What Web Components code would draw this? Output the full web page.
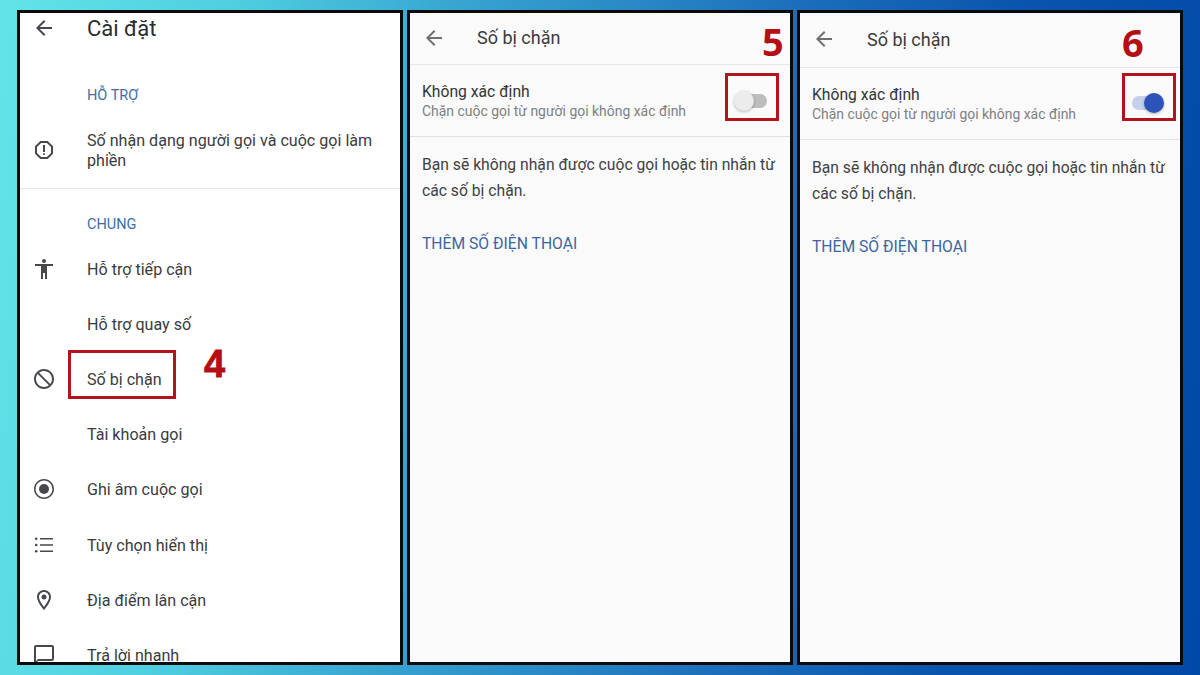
<!DOCTYPE html>
<html lang="vi">
<head>
<meta charset="utf-8">
<title>Số bị chặn</title>
<style>
html,body{margin:0;padding:0;height:100%}
body{width:1200px;height:675px;overflow:hidden;font-family:Roboto,"Noto Sans",sans-serif;background:linear-gradient(97deg,#62e4e8 0%,#4fcfe0 18%,#35a0cf 38%,#1c6fbb 62%,#0a54ad 80%,#0049a8 100%)}
</style>
</head>
<body>
<x-stage>
  <x-phone>
    <x-app-header title="Cài đặt" size="22" h="30" x="67"></x-app-header>
    <x-section-label top="43" bottom="23">HỖ TRỢ</x-section-label>
    <x-setting-item icon="report" two>Số nhận dạng người gọi và cuộc gọi làm phiền</x-setting-item>
    <x-rule top="17"></x-rule>
    <x-section-label top="26" bottom="6">CHUNG</x-section-label>
    <x-setting-item icon="access">Hỗ trợ tiếp cận</x-setting-item>
    <x-setting-item>Hỗ trợ quay số</x-setting-item>
    <x-setting-item icon="block">Số bị chặn</x-setting-item>
    <x-setting-item>Tài khoản gọi</x-setting-item>
    <x-setting-item icon="record">Ghi âm cuộc gọi</x-setting-item>
    <x-setting-item icon="list">Tùy chọn hiển thị</x-setting-item>
    <x-setting-item icon="place">Địa điểm lân cận</x-setting-item>
    <x-setting-item icon="chat">Trả lời nhanh</x-setting-item>
    <x-callout slot="over" left="48" top="337" width="108" height="49"></x-callout>
    <x-step slot="over" left="184" top="329" font="Liberation Sans" heavy>4</x-step>
  </x-phone>
  <x-phone tint>
    <x-blocked-screen head="49"></x-blocked-screen>
    <x-callout slot="over" left="315" top="60" width="54" height="48"></x-callout>
    <x-step slot="over" left="352" top="6">5</x-step>
  </x-phone>
  <x-phone tint>
    <x-blocked-screen head="52" on></x-blocked-screen>
    <x-callout slot="over" left="322" top="60" width="54" height="48"></x-callout>
    <x-step slot="over" left="322" top="7">6</x-step>
  </x-phone>
</x-stage>
<script>
const ICONS = {
  back:'<path d="M20 11H7.83l5.59-5.59L12 4l-8 8 8 8 1.41-1.41L7.83 13H20v-2z"/>',
  report:'<path d="M15.73 3H8.27L3 8.27v7.46L8.27 21h7.46L21 15.73V8.27L15.73 3zM19 14.9L14.9 19H9.1L5 14.9V9.1L9.1 5h5.8L19 9.1v5.8z"/><circle cx="12" cy="16" r="1"/><path d="M11 7h2v7h-2z"/>',
  access:'<path d="M12 2c1.1 0 2 .9 2 2s-.9 2-2 2-2-.9-2-2 .9-2 2-2zm9 7h-6v13h-2v-6h-2v6H9V9H3V7h18v2z"/>',
  block:'<path transform="matrix(-1 0 0 1 24 0)" d="M12 2C6.48 2 2 6.48 2 12s4.48 10 10 10 10-4.48 10-10S17.52 2 12 2zM4 12c0-4.42 3.58-8 8-8 1.85 0 3.55.63 4.9 1.69L5.69 16.9C4.63 15.55 4 13.85 4 12zm8 8c-1.85 0-3.55-.63-4.9-1.69L18.31 7.1C19.37 8.45 20 10.15 20 12c0 4.42-3.58 8-8 8z"/>',
  record:'<path d="M12 2C6.48 2 2 6.48 2 12s4.48 10 10 10 10-4.48 10-10S17.52 2 12 2zm0 18.4c-4.64 0-8.4-3.76-8.4-8.4S7.36 3.6 12 3.6s8.4 3.76 8.4 8.4-3.76 8.4-8.4 8.4z"/><circle cx="12" cy="12" r="5"/>',
  list:'<circle cx="4.2" cy="5.7" r="1.3"/><circle cx="4.2" cy="12" r="1.3"/><circle cx="4.2" cy="18.3" r="1.3"/><path d="M8 4.9h13v1.6H8zM8 11.2h13v1.6H8zM8 17.5h13v1.6H8z"/>',
  place:'<path d="M12 2C8.13 2 5 5.13 5 9c0 5.25 7 13 7 13s7-7.75 7-13c0-3.87-3.13-7-7-7zM7 9c0-2.76 2.24-5 5-5s5 2.24 5 5c0 2.88-2.88 7.19-5 9.88C9.92 16.21 7 11.85 7 9z"/><circle cx="12" cy="9" r="2.5"/>',
  chat:'<path d="M20 2H4c-1.1 0-2 .9-2 2v18l4-4h14c1.1 0 2-.9 2-2V4c0-1.1-.9-2-2-2zm0 14H6l-2 2V4h16v12z"/>'
};
const svg = (n,fill='#46484c') => `<svg viewBox="0 0 24 24" width="24" height="24" fill="${fill}" aria-hidden="true">${ICONS[n]||''}</svg>`;

class Base extends HTMLElement{
  constructor(){super();this.attachShadow({mode:'open'});}
  connectedCallback(){this.shadowRoot.innerHTML=this.render();}
  attr(n,d){return this.hasAttribute(n)?this.getAttribute(n):d;}
}
customElements.define('x-stage',class extends Base{render(){return `<style>
:host{display:flex;gap:4px;padding:10px 0 0 17px;box-sizing:border-box;width:1200px;height:675px}
</style><slot></slot>`}});
customElements.define('x-phone',class extends Base{render(){return `<style>
:host{display:block;position:relative;width:386px;height:655px;box-sizing:border-box;border:3px solid #0a0a0c;background:${this.hasAttribute('tint')?'#fafafa':'#fff'};flex:none}
.clip{height:100%;overflow:hidden}
</style><div class="clip"><slot></slot></div><slot name="over"></slot>`}});
customElements.define('x-app-header',class extends Base{render(){return `<style>
:host{display:flex;align-items:center;height:${this.attr('h')}px;color:#2b2c2f}
.i{width:${this.attr('x')}px;padding-left:12px;box-sizing:border-box;flex:none;display:flex}
.t{font-size:${this.attr('size')}px;line-height:30px;padding-top:2px}
</style><span class="i">${svg('back')}</span><span class="t">${this.attr('title')}</span>`}});
customElements.define('x-section-label',class extends Base{render(){return `<style>
:host{display:block;padding:${this.attr('top')}px 0 ${this.attr('bottom')}px 67px;font-size:14.5px;line-height:20px;color:#3b6ea5}
</style><slot></slot>`}});
customElements.define('x-rule',class extends Base{render(){return `<style>
:host{display:block;margin-top:${this.attr('top')}px;height:1px;background:#e4e4e4}
</style>`}});
customElements.define('x-setting-item',class extends Base{render(){const two=this.hasAttribute('two');return `<style>
:host{display:flex;align-items:center;min-height:${two?40:55.2}px;color:#3a3b3e;font-size:16.1px;line-height:20px}
.i{width:67px;padding-left:12px;box-sizing:border-box;flex:none;display:flex;height:24px}
.t{padding:2px 22px 0 0}
</style><span class="i">${svg(this.attr('icon',''))}</span><span class="t"><slot></slot></span>`}});
customElements.define('x-callout',class extends Base{render(){return `<style>
:host{position:absolute;left:${this.attr('left')}px;top:${this.attr('top')}px;width:${this.attr('width')}px;height:${this.attr('height')}px;box-sizing:border-box;border:3px solid #b3141b}
</style>`}});
customElements.define('x-step',class extends Base{render(){const f=this.attr('font','Open Sans');return `<style>
:host{position:absolute;left:${this.attr('left')}px;top:${this.attr('top')}px;font:700 38px/44px "${f}",sans-serif;color:#b30f14;${this.hasAttribute('heavy')?'-webkit-text-stroke:.8px #b30f14;':''}}
</style><slot></slot>`}});
customElements.define('x-toggle',class extends Base{render(){const on=this.hasAttribute('on');return `<style>
:host{display:block;position:relative;width:${on?32:33}px;height:20px;flex:none;${on?'margin-bottom:2px;':''}}
.track{position:absolute;left:${on?0:6}px;right:${on?2:0}px;top:3px;height:14px;border-radius:7px;background:${on?'#c5d0ea':'#bdbdbd'}}
.knob{position:absolute;${on?'right:0':'left:0'};top:0;width:20px;height:20px;border-radius:50%;background:${on?'#2c54b8':'#ececec'};box-shadow:0 1px 3px rgba(0,0,0,.28)}
</style><span class="track"></span><span class="knob"></span>`}});
customElements.define('x-blocked-screen',class extends Base{render(){const on=this.hasAttribute('on');return `<style>
:host{display:block;color:#3a3b3e}
header{display:flex;align-items:center;height:${this.attr('head')}px;padding-bottom:2px;border-bottom:1px solid #e6e6e6;box-sizing:content-box;color:#3a3b3e}
header .i{width:67px;padding-left:12px;box-sizing:border-box;display:flex}
header .t{font-size:18px}
.row{display:flex;align-items:center;justify-content:space-between;height:71px;border-bottom:1px solid #e2e2e2;padding:0 ${on?16:23}px 0 12px;box-sizing:content-box}
.a{font-size:15.7px;line-height:20px;color:#333437;padding-top:1px;margin-bottom:-1px}
.b{font-size:13.95px;line-height:20px;color:#7e7f82}
p{margin:15px 0 30px;padding:0 12px;font-size:15.7px;line-height:26px;color:#3f4043}
.link{padding:0 12px;font-size:15.7px;line-height:20px;color:#3d659f}
</style>
<header><span class="i">${svg('back','#6e6f72')}</span><span class="t">Số bị chặn</span></header>
<div class="row"><div><div class="a">Không xác định</div><div class="b">Chặn cuộc gọi từ người gọi không xác định</div></div><x-toggle ${on?'on':''}></x-toggle></div>
<p>Bạn sẽ không nhận được cuộc gọi hoặc tin nhắn từ các số bị chặn.</p>
<div class="link">THÊM SỐ ĐIỆN THOẠI</div>`}});
</script>
</body>
</html>
